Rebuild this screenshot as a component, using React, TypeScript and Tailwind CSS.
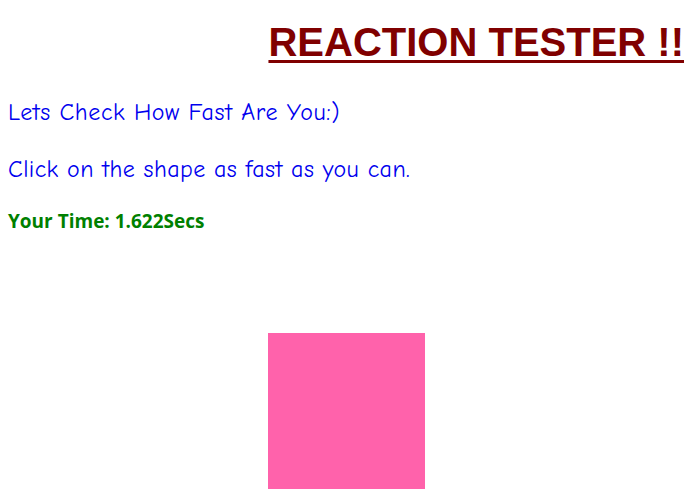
export default function App() {
  const comic = { fontFamily: '"Comic Sans MS", "Comic Neue", "Noto Sans", sans-serif' };

  return (
    <div className="w-[695px] h-[496px] bg-white overflow-hidden">
      <h1 className="pt-[20px] pr-[11px] text-right text-[40px] leading-[44px] font-bold text-[#800000] underline decoration-[3px] underline-offset-[4px] font-['Liberation_Sans',Arial,sans-serif]">
        REACTION TESTER !!
      </h1>
      <p style={comic} className="mt-[34px] ml-[8px] text-[24px] leading-[28px] tracking-[0.6px] text-[#0000ee]">
        Lets Check How Fast Are You:)
      </p>
      <p style={comic} className="mt-[29px] ml-[8px] text-[24px] leading-[28px] tracking-[0.4px] text-[#0000ee]">
        Click on the shape as fast as you can.
      </p>
      <p className="mt-[26px] ml-[8px] text-[19px] leading-[24px] font-bold text-[#008000] font-['Open_Sans','Noto_Sans',sans-serif]">
        Your Time: 1.622Secs
      </p>
      <div className="mt-[100px] ml-[268px] w-[157px] h-[156px] bg-[#ff62ab]"></div>
    </div>
  );
}
